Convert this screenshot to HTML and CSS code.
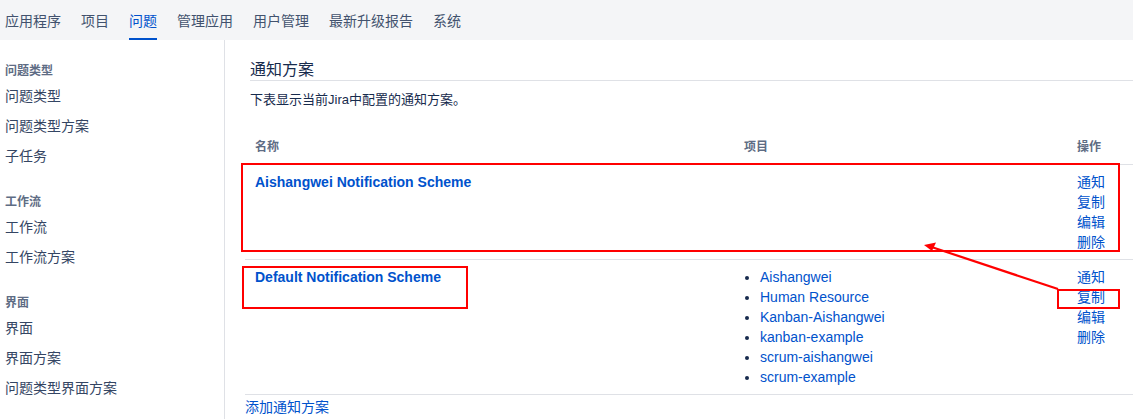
FILE: index.html
```html
<!DOCTYPE html>
<html lang="zh-CN">
<head>
<meta charset="utf-8">
<title>通知方案</title>
<link rel="stylesheet" href="styles.css">
</head>
<body>
<header class="topnav">
  <a class="tab">应用程序</a>
  <a class="tab">项目</a>
  <a class="tab active">问题</a>
  <a class="tab">管理应用</a>
  <a class="tab">用户管理</a>
  <a class="tab">最新升级报告</a>
  <a class="tab">系统</a>
</header>
<div class="layout">
  <nav class="sidebar">
    <div class="group">
      <div class="group-title">问题类型</div>
      <a class="side-item">问题类型</a>
      <a class="side-item">问题类型方案</a>
      <a class="side-item">子任务</a>
    </div>
    <div class="group">
      <div class="group-title">工作流</div>
      <a class="side-item">工作流</a>
      <a class="side-item">工作流方案</a>
    </div>
    <div class="group">
      <div class="group-title">界面</div>
      <a class="side-item">界面</a>
      <a class="side-item">界面方案</a>
      <a class="side-item">问题类型界面方案</a>
    </div>
  </nav>
  <main class="main">
    <h2 class="page-title">通知方案</h2>
    <p class="desc">下表显示当前Jira中配置的通知方案。</p>
    <table class="schemes">
      <thead>
        <tr>
          <th class="col-name">名称</th>
          <th class="col-proj">项目</th>
          <th class="col-ops">操作</th>
        </tr>
      </thead>
      <tbody>
        <tr>
          <td><a class="scheme-name">Aishangwei Notification Scheme</a></td>
          <td></td>
          <td>
            <ul class="ops">
              <li><a>通知</a></li>
              <li><a>复制</a></li>
              <li><a>编辑</a></li>
              <li><a>删除</a></li>
            </ul>
          </td>
        </tr>
        <tr>
          <td><a class="scheme-name">Default Notification Scheme</a></td>
          <td>
            <ul class="projects">
              <li><a>Aishangwei</a></li>
              <li><a>Human Resource</a></li>
              <li><a>Kanban-Aishangwei</a></li>
              <li><a>kanban-example</a></li>
              <li><a>scrum-aishangwei</a></li>
              <li><a>scrum-example</a></li>
            </ul>
          </td>
          <td>
            <ul class="ops">
              <li><a>通知</a></li>
              <li><a>复制</a></li>
              <li><a>编辑</a></li>
              <li><a>删除</a></li>
            </ul>
          </td>
        </tr>
      </tbody>
    </table>
    <a class="add-link">添加通知方案</a>
  </main>
</div>

<div class="mark mark-row"></div>
<div class="mark mark-name"></div>
<div class="mark mark-copy"></div>
<svg class="arrow" width="1133" height="419" viewBox="0 0 1133 419" xmlns="http://www.w3.org/2000/svg">
  <line x1="1058" y1="289" x2="930" y2="246.5" stroke="#ff0000" stroke-width="2.2"/>
  <polygon points="924,245 936,242.5 932,251" fill="#ff0000"/>
</svg>
</body>
</html>
```

FILE: styles.css
```css
* { box-sizing: border-box; }

html, body {
  margin: 0;
  padding: 0;
  background: #ffffff;
}

body {
  font-family: "Liberation Sans", "Noto Sans CJK SC", sans-serif;
  font-size: 14px;
  color: #172b4d;
  width: 1133px;
  height: 419px;
  overflow: hidden;
  position: relative;
}

a { color: #0052cc; text-decoration: none; }

/* top navigation */
.topnav {
  height: 40px;
  background: #f4f5f7;
  display: flex;
  align-items: stretch;
  gap: 20px;
  padding-left: 5px;
}

.tab {
  display: block;
  color: #42526e;
  font-size: 14px;
  line-height: 42px;
  height: 40px;
  position: relative;
  white-space: nowrap;
}

.tab.active { color: #0052cc; }

.tab.active::after {
  content: "";
  position: absolute;
  left: 0;
  right: 0;
  bottom: 0;
  height: 2px;
  background: #0052cc;
}

/* layout */
.layout {
  display: flex;
  height: 379px;
}

.sidebar {
  width: 225px;
  flex: none;
  border-right: 1px solid #dfe1e6;
  padding: 21px 0 0 5px;
  display: flex;
  flex-direction: column;
  gap: 21px;
}

.group { display: flex; flex-direction: column; }

.group-title {
  font-size: 12px;
  font-weight: bold;
  color: #5e6c84;
  line-height: 20px;
}

.side-item {
  display: block;
  color: #344563;
  font-size: 14px;
  line-height: 30px;
  height: 30px;
}

.main {
  flex: 1;
  padding: 20px 0 0 20px;
  min-width: 0;
}

.page-title {
  margin: 0 0 0 5px;
  font-size: 16px;
  font-weight: normal;
  line-height: 20px;
  color: #172b4d;
  border-bottom: 1px solid #dfe1e6;
}

.desc {
  margin: 9px 0 0 5px;
  font-size: 13px;
  line-height: 20px;
  color: #172b4d;
}

.schemes {
  margin-top: 20px;
  width: 888px;
  border-collapse: collapse;
  table-layout: fixed;
}

.schemes th,
.schemes td {
  padding: 7px 10px;
  text-align: left;
  vertical-align: top;
  line-height: 20px;
  font-size: 14px;
}

.schemes th {
  font-size: 12px;
  font-weight: bold;
  color: #5e6c84;
  border-bottom: 1px solid #dfe1e6;
}

.schemes td { border-bottom: 1px solid #dfe1e6; }

.col-name { width: 489px; }
.col-proj { width: 333px; }
.col-ops { width: 66px; }

.scheme-name {
  font-weight: bold;
  font-size: 14px;
}

.ops {
  list-style: none;
  margin: 0;
  padding: 0;
}

.ops li { line-height: 20px; font-size: 14px; }

.projects {
  margin: 0;
  padding-left: 16px;
  list-style: disc;
  color: #172b4d;
}

.projects li { line-height: 20px; }

.add-link {
  display: block;
  margin-top: 2px;
  font-size: 14px;
  line-height: 20px;
}

/* red annotations */
.mark {
  position: absolute;
  border: 2px solid #ff0000;
  pointer-events: none;
}

.mark-row { left: 241px; top: 163px; width: 879px; height: 89px; }
.mark-name { left: 242px; top: 266px; width: 226px; height: 43px; }
.mark-copy { left: 1057px; top: 289px; width: 63px; height: 20px; }

.arrow {
  position: absolute;
  left: 0;
  top: 0;
  pointer-events: none;
}
```
